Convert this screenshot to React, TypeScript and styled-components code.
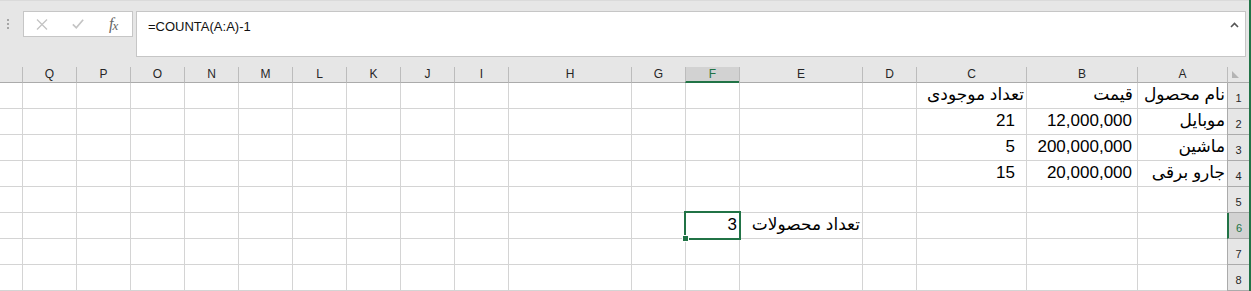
import React from "react";
import styled, { createGlobalStyle } from "styled-components";

const GREEN = "#217346";

const GlobalStyle = createGlobalStyle`
  html, body {
    margin: 0;
    padding: 0;
    background: #ffffff;
  }
  body {
    font-family: "Liberation Sans", "DejaVu Sans", sans-serif;
  }
`;

interface ICol {
  key: string;
  label: string;
  width: number;
}

interface ICell {
  value: string;
  pad: number;
}

const columns: ICol[] = [
  { key: "A", label: "A", width: 90 },
  { key: "B", label: "B", width: 111 },
  { key: "C", label: "C", width: 110 },
  { key: "D", label: "D", width: 54 },
  { key: "E", label: "E", width: 123 },
  { key: "F", label: "F", width: 54 },
  { key: "G", label: "G", width: 54 },
  { key: "H", label: "H", width: 123 },
  { key: "I", label: "I", width: 54 },
  { key: "J", label: "J", width: 54 },
  { key: "K", label: "K", width: 54 },
  { key: "L", label: "L", width: 54 },
  { key: "M", label: "M", width: 54 },
  { key: "N", label: "N", width: 54 },
  { key: "O", label: "O", width: 54 },
  { key: "P", label: "P", width: 54 },
  { key: "Q", label: "Q", width: 54 },
  { key: "R", label: "", width: 22 },
];

const cells: Record<string, ICell> = {
  A1: { value: "نام محصول", pad: 2 },
  B1: { value: "قیمت", pad: 4 },
  C1: { value: "تعداد موجودی", pad: 2 },
  A2: { value: "موبایل", pad: 2 },
  B2: { value: "12,000,000", pad: 5 },
  C2: { value: "21", pad: 11 },
  A3: { value: "ماشین", pad: 2 },
  B3: { value: "200,000,000", pad: 5 },
  C3: { value: "5", pad: 11 },
  A4: { value: "جارو برقی", pad: 2 },
  B4: { value: "20,000,000", pad: 5 },
  C4: { value: "15", pad: 11 },
  E6: { value: "تعداد محصولات", pad: 2 },
  F6: { value: "3", pad: 2 },
};

const rows = [1, 2, 3, 4, 5, 6, 7, 8];
const activeCol = "F";
const activeRow = 6;

function App() {
  return (
    <>
      <GlobalStyle />
      <Frame>
        <FormulaBar>
          <Grip>
            <span />
            <span />
            <span />
          </Grip>
          <ButtonsBox>
            <IconSlot>
              <svg width="12" height="11" viewBox="0 0 12 11">
                <path d="M1 0.5 L11 10.5 M11 0.5 L1 10.5" stroke="#c4c4c4" strokeWidth="1.3" fill="none" />
              </svg>
            </IconSlot>
            <IconSlot>
              <svg width="14" height="12" viewBox="0 0 14 12">
                <path d="M1 6.5 L5 10.5 L13 1" stroke="#c4c4c4" strokeWidth="2" fill="none" />
              </svg>
            </IconSlot>
            <FxLabel>
              f<sub>x</sub>
            </FxLabel>
          </ButtonsBox>
          <FormulaInput>
            <FormulaText>=COUNTA(A:A)-1</FormulaText>
            <Caret>
              <svg width="9" height="6" viewBox="0 0 9 6">
                <path d="M1 5 L4.5 1.5 L8 5" stroke="#555" strokeWidth="1.6" fill="none" />
              </svg>
            </Caret>
          </FormulaInput>
        </FormulaBar>

        <Sheet $widths={columns.map((c) => c.width)}>
          <Corner>
            <svg width="7" height="7" viewBox="0 0 7 7">
              <polygon points="0,0 0,7 7,7" fill="#b4b4b4" />
            </svg>
          </Corner>
          {columns.map((col) => (
            <ColHeader
              key={col.key}
              $active={col.key === activeCol}
              $edge={col.key === "R"}
            >
              {col.label}
            </ColHeader>
          ))}

          {rows.map((r) => (
            <React.Fragment key={r}>
              <RowHeader $active={r === activeRow}>{r}</RowHeader>
              {columns.map((col) => {
                const id = `${col.key}${r}`;
                const cell = cells[id];
                const selected = col.key === activeCol && r === activeRow;
                return (
                  <Cell key={id} $pad={cell ? cell.pad : 2} $edge={col.key === "R"}>
                    {cell && <CellText>{cell.value}</CellText>}
                    {selected && (
                      <Selection>
                        <FillHandle />
                      </Selection>
                    )}
                  </Cell>
                );
              })}
            </React.Fragment>
          ))}
        </Sheet>
      </Frame>
    </>
  );
}

const Frame = styled.div`
  width: 1251px;
  height: 291px;
  box-sizing: border-box;
  border-right: 2px solid ${GREEN};
  overflow: hidden;
  display: flex;
  flex-direction: column;
  background: #ffffff;
`;

const FormulaBar = styled.div`
  height: 67px;
  flex: none;
  box-sizing: border-box;
  background: #e6e6e6;
  border-top: 1px solid #dadada;
  padding: 10px 3px 0 0;
  display: flex;
  align-items: flex-start;
`;

const Grip = styled.div`
  width: 23px;
  height: 26px;
  display: flex;
  flex-direction: column;
  align-items: flex-start;
  padding: 8px 0 0 7px;
  box-sizing: border-box;
  gap: 2px;
  span {
    width: 2px;
    height: 2px;
    background: #a6a6a6;
  }
`;

const ButtonsBox = styled.div`
  width: 110px;
  height: 26px;
  box-sizing: border-box;
  border: 1px solid #c6c6c6;
  background: #ffffff;
  display: flex;
  align-items: center;
  padding-left: 12px;
  gap: 24px;
`;

const IconSlot = styled.div`
  width: 12px;
  display: flex;
  align-items: center;
  justify-content: center;
  svg {
    display: block;
  }
`;

const FxLabel = styled.div`
  font-family: "Liberation Serif", "DejaVu Serif", serif;
  font-style: italic;
  font-size: 16px;
  color: #666666;
  line-height: 1;
  margin-left: 1px;
  letter-spacing: -1px;
  sub {
    font-size: 13px;
    vertical-align: baseline;
    position: relative;
    top: 1px;
  }
`;

const FormulaInput = styled.div`
  flex: 1;
  margin-left: 3px;
  height: 46px;
  box-sizing: border-box;
  border: 1px solid #c6c6c6;
  background: #ffffff;
  display: flex;
  align-items: flex-start;
  padding: 7px 6px 0 11px;
`;

const FormulaText = styled.div`
  flex: 1;
  font-size: 13px;
  line-height: 16px;
  color: #111111;
`;

const Caret = styled.div`
  padding-top: 3px;
  svg {
    display: block;
  }
`;

const Sheet = styled.div<{ $widths: number[] }>`
  flex: 1;
  display: grid;
  direction: rtl;
  grid-template-columns: 22px ${(p) => p.$widths.map((w) => `${w}px`).join(" ")};
  grid-template-rows: 16px repeat(8, 26px);
`;

const Corner = styled.div`
  box-sizing: border-box;
  background: #e6e6e6;
  border-left: 1px solid #bcbcbc;
  border-bottom: 1px solid #ababab;
  direction: ltr;
  padding: 4px 0 0 4px;
  svg {
    display: block;
  }
`;

const ColHeader = styled.div<{ $active: boolean; $edge: boolean }>`
  box-sizing: border-box;
  background: ${(p) => (p.$active ? "#d2d2d2" : "#e6e6e6")};
  border-left: ${(p) => (p.$edge ? "none" : "1px solid #bcbcbc")};
  border-bottom: ${(p) => (p.$active ? `2px solid ${GREEN}` : "1px solid #ababab")};
  color: ${(p) => (p.$active ? GREEN : "#262626")};
  font-size: 12px;
  line-height: 15px;
  text-align: center;
`;

const RowHeader = styled.div<{ $active: boolean }>`
  box-sizing: border-box;
  background: ${(p) => (p.$active ? "#d2d2d2" : "#e6e6e6")};
  border-left: ${(p) => (p.$active ? `2px solid ${GREEN}` : "1px solid #ababab")};
  border-bottom: 1px solid #ababab;
  color: ${(p) => (p.$active ? GREEN : "#262626")};
  font-size: 11px;
  display: flex;
  align-items: flex-end;
  justify-content: center;
  padding-bottom: 4px;
`;

const Cell = styled.div<{ $pad: number; $edge: boolean }>`
  position: relative;
  box-sizing: border-box;
  border-left: ${(p) => (p.$edge ? "none" : "1px solid #d4d4d4")};
  border-bottom: 1px solid #d4d4d4;
  padding: 0 ${(p) => p.$pad}px 3px 0;
  display: flex;
  align-items: flex-end;
  justify-content: flex-start;
  white-space: nowrap;
  overflow: visible;
`;

const CellText = styled.span`
  font-size: 17px;
  line-height: 20px;
  color: #000000;
  position: relative;
  z-index: 1;
`;

const Selection = styled.div`
  position: absolute;
  inset: -2px;
  border: 2px solid ${GREEN};
  z-index: 2;
  pointer-events: none;
`;

const FillHandle = styled.div`
  position: absolute;
  left: -4px;
  bottom: -4px;
  width: 5px;
  height: 5px;
  background: ${GREEN};
  border: 1px solid #ffffff;
`;

export default App;
